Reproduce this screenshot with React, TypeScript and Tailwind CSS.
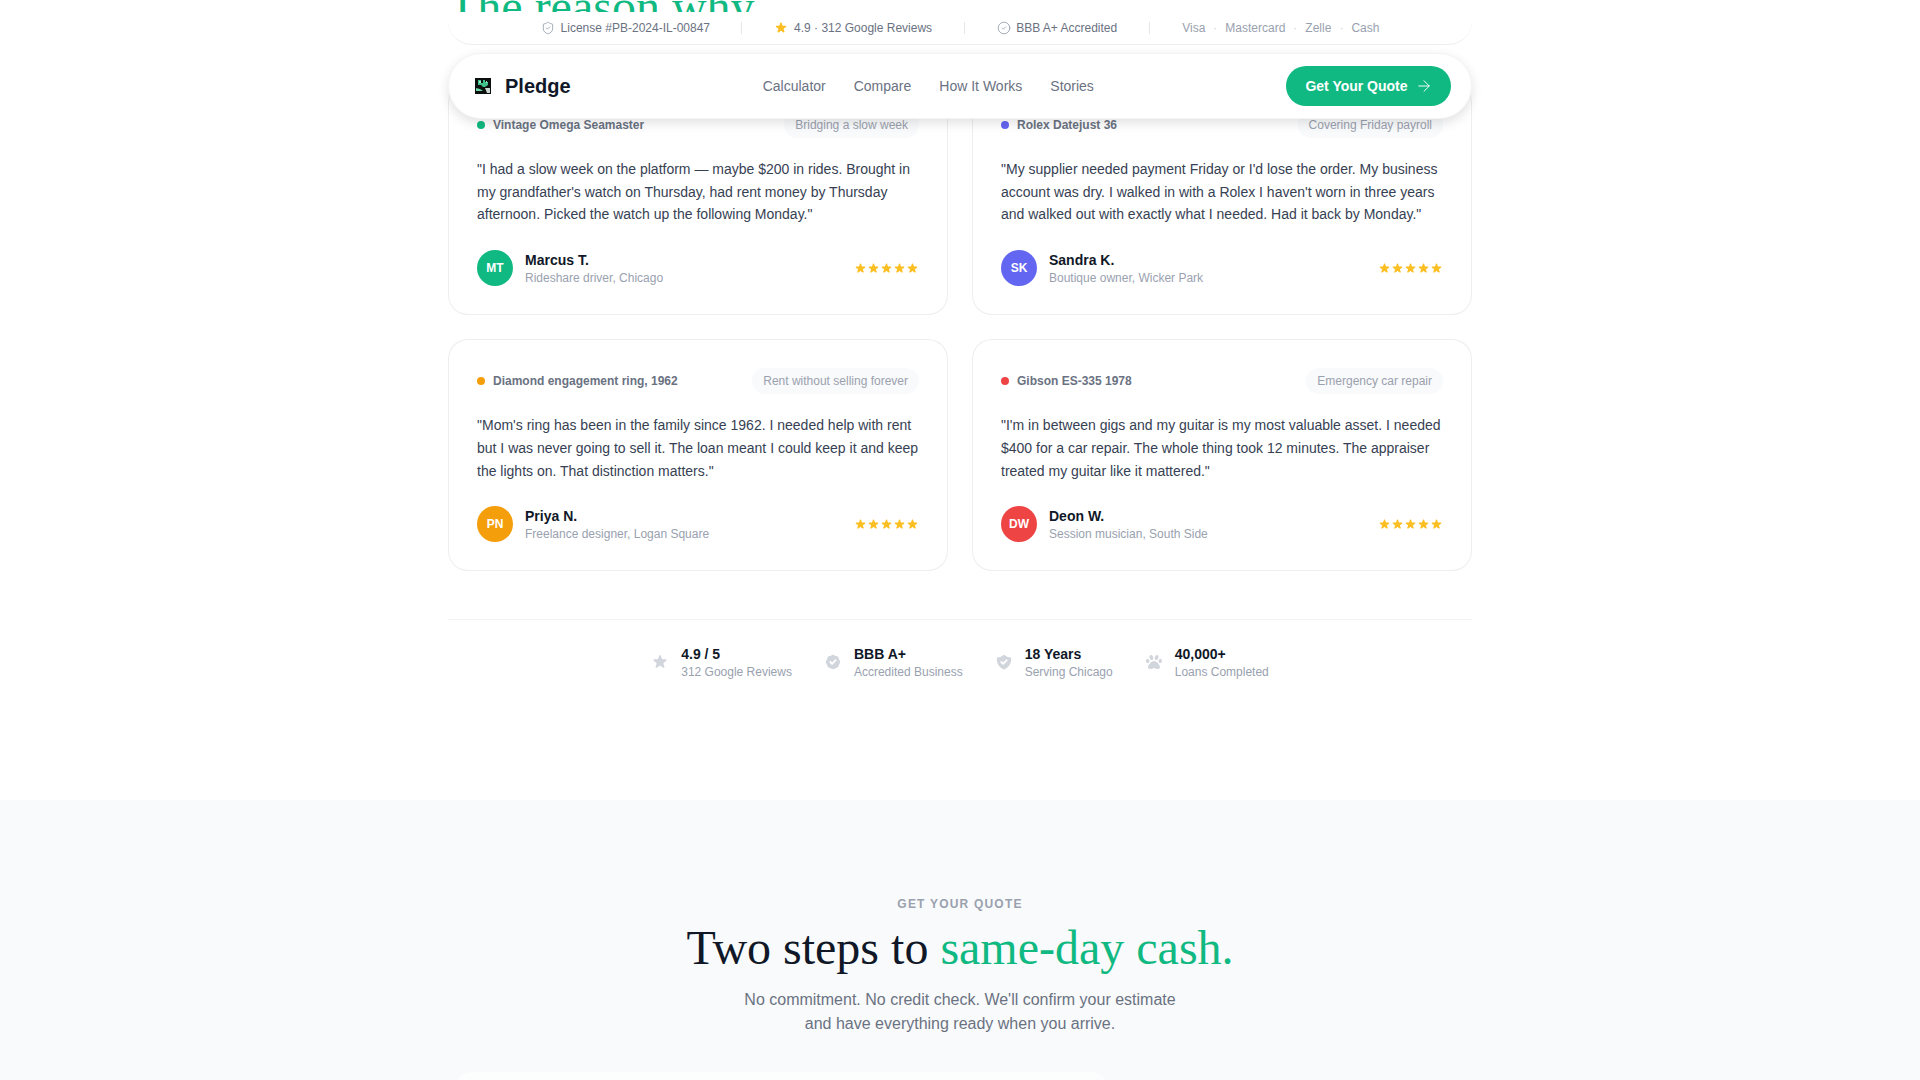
import { ArrowRight, CircleCheck, ShieldCheck } from "lucide-react";
import { FaPaw } from "react-icons/fa";
import { HiBadgeCheck, HiShieldCheck, HiStar } from "react-icons/hi";

const reviews = [
  {
    item: "Vintage Omega Seamaster",
    dot: "bg-[#10b981]",
    tag: "Bridging a slow week",
    quote: `"I had a slow week on the platform — maybe $200 in rides. Brought in my grandfather's watch on Thursday, had rent money by Thursday afternoon. Picked the watch up the following Monday."`,
    initials: "MT",
    avatar: "bg-[#10b981]",
    name: "Marcus T.",
    role: "Rideshare driver, Chicago",
  },
  {
    item: "Rolex Datejust 36",
    dot: "bg-[#6366f1]",
    tag: "Covering Friday payroll",
    quote: `"My supplier needed payment Friday or I'd lose the order. My business account was dry. I walked in with a Rolex I haven't worn in three years and walked out with exactly what I needed. Had it back by Monday."`,
    initials: "SK",
    avatar: "bg-[#6366f1]",
    name: "Sandra K.",
    role: "Boutique owner, Wicker Park",
  },
  {
    item: "Diamond engagement ring, 1962",
    dot: "bg-[#f59e0b]",
    tag: "Rent without selling forever",
    quote: `"Mom's ring has been in the family since 1962. I needed help with rent but I was never going to sell it. The loan meant I could keep it and keep the lights on. That distinction matters."`,
    initials: "PN",
    avatar: "bg-[#f59e0b]",
    name: "Priya N.",
    role: "Freelance designer, Logan Square",
  },
  {
    item: "Gibson ES-335 1978",
    dot: "bg-[#ef4444]",
    tag: "Emergency car repair",
    quote: `"I'm in between gigs and my guitar is my most valuable asset. I needed $400 for a car repair. The whole thing took 12 minutes. The appraiser treated my guitar like it mattered."`,
    initials: "DW",
    avatar: "bg-[#ef4444]",
    name: "Deon W.",
    role: "Session musician, South Side",
  },
];

const stats = [
  { icon: <HiStar size={18} />, title: "4.9 / 5", sub: "312 Google Reviews" },
  { icon: <HiBadgeCheck size={18} />, title: "BBB A+", sub: "Accredited Business" },
  { icon: <HiShieldCheck size={18} />, title: "18 Years", sub: "Serving Chicago" },
  { icon: <FaPaw size={16} />, title: "40,000+", sub: "Loans Completed" },
];

function Logo() {
  return (
    <svg viewBox="0 0 16 16" className="w-4 h-4">
      <rect width="16" height="16" fill="#0b0f0d" />
      <path d="M3 2h3v3h2V2h2v2h3v3l-3 2H8L6 7H3z" fill="#3fbf8a" />
      <path d="M4 3h2v2H4zM11 3h1v2h-1z" fill="#a7e8cb" />
      <path d="M1 10l4 1 3 2H1z" fill="#6fd6a8" />
      <path d="M10 10h5v5h-3z" fill="#c9d6cf" />
    </svg>
  );
}

function Divider() {
  return <span className="w-px h-3 bg-gray-200" />;
}

function TrustBar() {
  return (
    <div className="absolute top-[12px] left-[448px] w-[1024px] h-[33px] bg-white rounded-b-[24px] border-b border-gray-200/70 flex items-center justify-center gap-8 text-xs text-gray-500">
      <div className="flex items-center gap-1.5 -mr-px">
        <ShieldCheck size={14} strokeWidth={1.5} className="text-gray-400" />
        <span>License #PB-2024-IL-00847</span>
      </div>
      <Divider />
      <div className="flex items-center gap-1.5">
        <HiStar size={14} className="text-[#fbbf24]" />
        <span>4.9 · 312 Google Reviews</span>
      </div>
      <Divider />
      <div className="flex items-center gap-[5px]">
        <CircleCheck size={14} strokeWidth={1.5} className="text-gray-400" />
        <span>BBB A+ Accredited</span>
      </div>
      <Divider />
      <div className="flex items-center gap-2 text-gray-400">
        <span>Visa</span>
        <span className="text-gray-300">·</span>
        <span>Mastercard</span>
        <span className="text-gray-300">·</span>
        <span>Zelle</span>
        <span className="text-gray-300">·</span>
        <span>Cash</span>
      </div>
    </div>
  );
}

function Nav() {
  return (
    <nav className="absolute top-[53px] left-[448px] w-[1024px] h-[66px] bg-white rounded-[33px] border border-gray-100 shadow-[0_4px_12px_rgba(0,0,0,0.12)] flex items-center justify-between pl-[26px] pr-5">
      <div className="flex items-center gap-3.5">
        <Logo />
        <span className="text-xl font-bold text-gray-900">Pledge</span>
      </div>
      <div className="flex items-center gap-7 text-sm text-gray-500">
        <span>Calculator</span>
        <span>Compare</span>
        <span>How It Works</span>
        <span>Stories</span>
      </div>
      <button className="h-10 w-[165px] pl-px rounded-full bg-[#10b981] text-white text-sm font-semibold flex items-center justify-center gap-[7px]">
        Get Your Quote
        <ArrowRight size={18} strokeWidth={1.25} />
      </button>
    </nav>
  );
}

function ReviewCard({ review }: { review: (typeof reviews)[number] }) {
  return (
    <div className="bg-white border border-gray-200/70 rounded-[20px] p-7">
      <div className="flex items-center justify-between h-[26px] mb-5">
        <div className="flex items-center gap-2">
          <span className={`w-2 h-2 rounded-full ${review.dot}`} />
          <span className="text-xs font-semibold text-gray-500">{review.item}</span>
        </div>
        <span className="h-[26px] flex items-center px-[11px] rounded-full bg-gray-50 text-xs text-gray-400">
          {review.tag}
        </span>
      </div>
      <p className="text-sm leading-[22.75px] text-gray-700">{review.quote}</p>
      <div className="flex items-center justify-between mt-6">
        <div className="flex items-center gap-3">
          <div className={`w-9 h-9 rounded-full flex items-center justify-center text-xs font-bold text-white ${review.avatar}`}>
            {review.initials}
          </div>
          <div>
            <div className="text-sm font-semibold leading-[18px] text-gray-900">{review.name}</div>
            <div className="mt-px text-xs leading-4 text-gray-400">{review.role}</div>
          </div>
        </div>
        <div className="flex">
          {[0, 1, 2, 3, 4].map((i) => (
            <HiStar key={i} size={13} className="text-[#fbbf24]" />
          ))}
        </div>
      </div>
    </div>
  );
}

export default function App() {
  return (
    <div className="relative h-screen overflow-hidden bg-white font-['Liberation_Sans',sans-serif]">
      <div className="-mt-[23px]">
        <div className="w-[1024px] mx-auto">
          <h2 className="h-[60px] mb-[45.9px] text-[48px] leading-[60px] font-['Liberation_Serif',serif] text-[#10b981]">
            The reason why
          </h2>
          <div className="grid grid-cols-2 gap-6">
            {reviews.map((review) => (
              <ReviewCard key={review.name} review={review} />
            ))}
          </div>
          <div className="mt-12 pt-6 border-t border-gray-100 flex justify-center gap-8">
            {stats.map((stat) => (
              <div key={stat.title} className="flex items-center gap-3">
                <span className="w-[18px] flex justify-center text-gray-300">{stat.icon}</span>
                <div>
                  <div className="text-sm font-semibold leading-5 text-gray-900">{stat.title}</div>
                  <div className="text-xs leading-4 text-gray-400">{stat.sub}</div>
                </div>
              </div>
            ))}
          </div>
        </div>
        <section className="mt-[120px] bg-gray-50 pt-[96px] h-[400px]">
          <div className="text-center">
            <div className="text-xs font-semibold tracking-[0.1em] leading-4 text-gray-400 uppercase">Get your quote</div>
            <h2 className="mt-[6px] text-[48px] leading-[60px] font-['Liberation_Serif',serif] text-gray-900">
              Two steps to <span className="text-[#10b981]">same-day cash.</span>
            </h2>
            <p className="mt-[10px] text-base leading-6 text-gray-500">
              No commitment. No credit check. We'll confirm your estimate
              <br />
              and have everything ready when you arrive.
            </p>
          </div>
          <div className="mt-[36px] ml-[455px] w-[653px] h-[40px] bg-white/50 rounded-t-2xl" />
        </section>
      </div>
      <TrustBar />
      <Nav />
    </div>
  );
}
